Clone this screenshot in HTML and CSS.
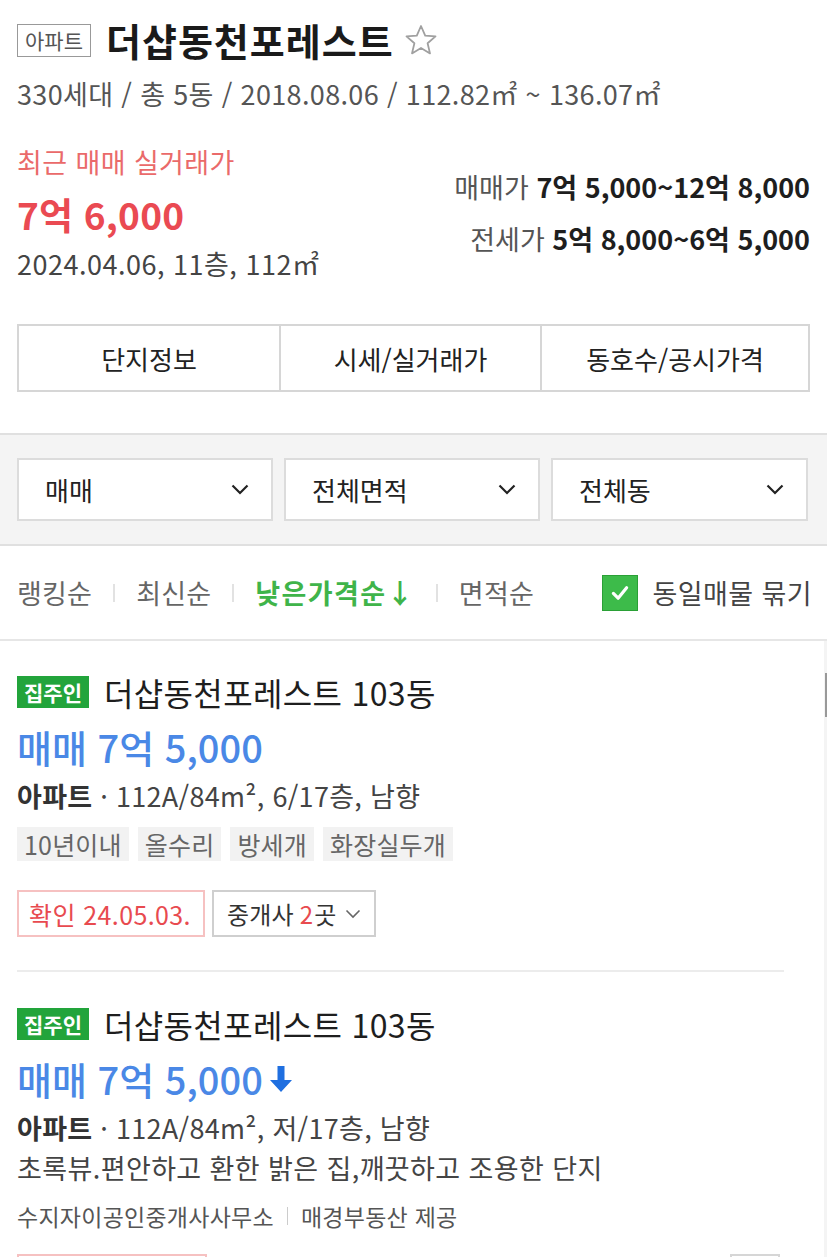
FILE: index.html
```html
<!DOCTYPE html>
<html lang="ko">
<head>
<meta charset="utf-8">
<title>더샵동천포레스트</title>
<link rel="stylesheet" href="styles.css">
</head>
<body>
<div class="page">
  <header class="complex">
    <div class="title-row">
      <span class="type-badge">아파트</span>
      <h1 class="complex-name">더샵동천포레스트</h1>
      <svg class="star" viewBox="0 0 34 34" width="34" height="34"><polygon points="17,3 21.2,12.6 31.5,13.4 23.6,20.2 26,30.4 17,25 8,30.4 10.4,20.2 2.5,13.4 12.8,12.6" fill="none" stroke="#a0a0a0" stroke-width="1.8" stroke-linejoin="round"/></svg>
    </div>
    <p class="summary">330세대 / 총 5동 / 2018.08.06 / 112.82㎡ ~ 136.07㎡</p>
    <div class="price-area">
      <div class="recent">
        <p class="recent-label">최근 매매 실거래가</p>
        <p class="recent-price">7억 6,000</p>
        <p class="recent-date">2024.04.06, 11층, 112㎡</p>
      </div>
      <div class="ranges">
        <p class="range"><span class="range-label">매매가</span> <b>7억 5,000~12억 8,000</b></p>
        <p class="range"><span class="range-label">전세가</span> <b>5억 8,000~6억 5,000</b></p>
      </div>
    </div>
    <nav class="tabs">
      <a class="tab">단지정보</a>
      <a class="tab">시세/실거래가</a>
      <a class="tab">동호수/공시가격</a>
    </nav>
  </header>

  <section class="filters">
    <div class="select"><span>매매</span><svg class="chev" viewBox="0 0 18 11" width="18" height="11"><polyline points="1.5,1.5 9,9 16.5,1.5" fill="none" stroke="#222" stroke-width="2.2"/></svg></div>
    <div class="select"><span>전체면적</span><svg class="chev" viewBox="0 0 18 11" width="18" height="11"><polyline points="1.5,1.5 9,9 16.5,1.5" fill="none" stroke="#222" stroke-width="2.2"/></svg></div>
    <div class="select"><span>전체동</span><svg class="chev" viewBox="0 0 18 11" width="18" height="11"><polyline points="1.5,1.5 9,9 16.5,1.5" fill="none" stroke="#222" stroke-width="2.2"/></svg></div>
  </section>

  <section class="sortbar">
    <div class="sorts">
      <span class="sort">랭킹순</span>
      <span class="sep"></span>
      <span class="sort">최신순</span>
      <span class="sep"></span>
      <span class="sort active">낮은가격순↓</span>
      <span class="sep"></span>
      <span class="sort">면적순</span>
    </div>
    <label class="check">
      <span class="box"><svg viewBox="0 0 36 36" width="36" height="36"><polyline points="11,18.5 16,23.5 25,12.5" fill="none" stroke="#fff" stroke-width="3.4" stroke-linecap="round" stroke-linejoin="round"/></svg></span>
      <span class="check-text">동일매물 묶기</span>
    </label>
  </section>

  <section class="list">
    <article class="item">
      <div class="item-head">
        <span class="owner">집주인</span>
        <span class="item-name">더샵동천포레스트 103동</span>
      </div>
      <p class="item-price">매매 7억 5,000</p>
      <p class="item-info"><b>아파트</b> · 112A/84m², 6/17층, 남향</p>
      <div class="tags">
        <span class="tag">10년이내</span>
        <span class="tag">올수리</span>
        <span class="tag">방세개</span>
        <span class="tag">화장실두개</span>
      </div>
      <div class="actions">
        <span class="confirm">확인 24.05.03.</span>
        <span class="agents">중개사 <em>2</em>곳 <svg viewBox="0 0 16 10" width="16" height="10"><polyline points="1.5,1.5 8,8 14.5,1.5" fill="none" stroke="#666" stroke-width="1.6"/></svg></span>
      </div>
    </article>
    <article class="item">
      <div class="item-head">
        <span class="owner">집주인</span>
        <span class="item-name">더샵동천포레스트 103동</span>
      </div>
      <p class="item-price">매매 7억 5,000<svg class="down" viewBox="0 0 28 32" width="28" height="32"><path d="M10.5 3h7v14h7.5L14 29 3 17h7.5z" fill="#1f6fe0"/></svg></p>
      <p class="item-info"><b>아파트</b> · 112A/84m², 저/17층, 남향</p>
      <p class="item-desc">초록뷰.편안하고 환한 밝은 집,깨끗하고 조용한 단지</p>
      <p class="item-source">수지자이공인중개사사무소<span class="src-sep"></span>매경부동산 제공</p>
      <div class="actions next">
        <span class="confirm-edge"></span>
        <span class="more"></span>
      </div>
    </article>
    <div class="scroll-track"><span class="scroll-thumb"></span></div>
  </section>
</div>
</body>
</html>
```

FILE: styles.css
```css
html, body {
  margin: 0;
  padding: 0;
  background: #fff;
  overflow: hidden;
}
body {
  font-family: "Noto Sans CJK KR", "Noto Sans", sans-serif;
  color: #222;
}
p { margin: 0; }
h1 { margin: 0; }

.page {
  width: 827px;
  height: 1257px;
  overflow: hidden;
}

.complex {
  padding: 20px 17px 0 17px;
}
.title-row {
  display: flex;
  align-items: center;
  height: 40px;
}
.type-badge {
  box-sizing: border-box;
  height: 33px;
  padding: 0 7px;
  border: 1px solid #999;
  font-size: 21px;
  line-height: 31px;
  color: #555;
  letter-spacing: 0;
}
.complex-name {
  margin-left: 15px;
  font-size: 38px;
  font-weight: 700;
  line-height: 40px;
  letter-spacing: 1px;
  color: #1a1a1a;
}
.star {
  margin-left: 10px;
}
.summary {
  margin-top: 16px;
  font-size: 27px;
  line-height: 36px;
  color: #555;
  letter-spacing: 0.35px;
}

.price-area {
  display: flex;
  justify-content: space-between;
  align-items: center;
  margin-top: 32px;
}
.recent-label {
  font-size: 27px;
  line-height: 36px;
  color: #ea6a6a;
  letter-spacing: 0.4px;
}
.recent-price {
  margin-top: 11px;
  font-size: 37px;
  line-height: 46px;
  font-weight: 700;
  color: #ea4a52;
  letter-spacing: 0.2px;
}
.recent-date {
  margin-top: 9px;
  font-size: 27px;
  line-height: 36px;
  color: #444;
  letter-spacing: 0.5px;
}
.ranges {
  display: flex;
  flex-direction: column;
  align-items: flex-end;
  gap: 12px;
}
.range {
  font-size: 27px;
  line-height: 40px;
  letter-spacing: 0;
}
.range-label {
  color: #555;
}
.range b {
  color: #1e1e1e;
  font-weight: 700;
}

.tabs {
  display: grid;
  grid-template-columns: 260px 261px 1fr;
  margin-top: 42px;
  height: 68px;
  box-sizing: border-box;
  border: 2px solid #d6d6d6;
}
.tab {
  display: flex;
  align-items: center;
  justify-content: center;
  font-size: 26px;
  color: #222;
  letter-spacing: 0;
}
.tab + .tab {
  border-left: 2px solid #d6d6d6;
}

.filters {
  margin-top: 41px;
  background: #f4f4f4;
  border-top: 2px solid #e0e0e0;
  border-bottom: 2px solid #e0e0e0;
  padding: 23px 18px 23px 17px;
  display: grid;
  grid-template-columns: 256px 256px 257px;
  gap: 11px;
}
.select {
  box-sizing: border-box;
  height: 63px;
  background: #fff;
  border: 2px solid #dcdcdc;
  display: flex;
  align-items: center;
  justify-content: space-between;
  padding: 0 22px 0 26px;
  font-size: 26px;
  color: #222;
  letter-spacing: 0;
}

.sortbar {
  height: 95px;
  box-sizing: border-box;
  border-bottom: 2px solid #e6e6e6;
  display: flex;
  align-items: center;
  justify-content: space-between;
  padding: 0 15px 0 17px;
}
.sorts {
  display: flex;
  align-items: center;
}
.sort {
  font-size: 27px;
  color: #666;
  letter-spacing: 0.2px;
}
.sort.active {
  color: #3fb44a;
  font-weight: 700;
  letter-spacing: 1.4px;
}
.sep {
  width: 2px;
  height: 18px;
  background: #e2e2e2;
  margin: 0 21px;
}
.check {
  display: flex;
  align-items: center;
}
.box {
  width: 36px;
  height: 36px;
  box-sizing: border-box;
  background: #3dbb4a;
  border: 1px solid #2aa036;
  display: flex;
  align-items: center;
  justify-content: center;
}
.box svg { display: block; }
.check-text {
  margin-left: 15px;
  font-size: 27px;
  color: #444;
  letter-spacing: 0.4px;
}

.list {
  position: relative;
  padding: 0 43px 0 17px;
}
.item {
  padding: 35px 0 33px;
  border-bottom: 2px solid #ececec;
}
.item + .item {
  padding-top: 36px;
  border-bottom: 0;
}
.item-head {
  display: flex;
  align-items: center;
  height: 32px;
}
.owner {
  height: 32px;
  padding: 0 7px;
  background: #22a43b;
  color: #fff;
  font-size: 21px;
  font-weight: 700;
  line-height: 32px;
  letter-spacing: 0;
}
.item-name {
  margin-left: 15px;
  font-size: 32px;
  line-height: 32px;
  color: #1e1e1e;
  letter-spacing: 0.35px;
}
.item-price {
  margin-top: 16px;
  display: flex;
  align-items: center;
  font-size: 38px;
  line-height: 46px;
  font-weight: 500;
  color: #4a88e6;
  letter-spacing: 0;
}
.down {
  margin-left: 4px;
}
.item-info {
  margin-top: 8px;
  font-size: 27px;
  line-height: 36px;
  color: #444;
  letter-spacing: 0.3px;
}
.item-info b {
  color: #333;
  font-weight: 700;
}
.tags {
  margin-top: 13px;
  display: flex;
  gap: 9px;
}
.tag {
  height: 34px;
  padding: 0 7px;
  background: #f2f2f2;
  font-size: 25px;
  line-height: 34px;
  color: #666;
  letter-spacing: 0.2px;
}
.actions {
  margin-top: 29px;
  display: flex;
  gap: 7px;
}
.confirm, .agents {
  box-sizing: border-box;
  height: 47px;
  display: flex;
  align-items: center;
  letter-spacing: 0.2px;
}
.confirm {
  padding: 0 12px 0 10px;
  border: 2px solid #f6c1c1;
  color: #e84a4f;
  font-size: 25px;
  letter-spacing: 0.4px;
}
.agents {
  padding: 0 13px;
  border: 2px solid #cfcfcf;
  color: #333;
  font-size: 24px;
}
.agents em {
  font-style: normal;
  color: #e84a4f;
  margin: 0 1px 0 6px;
}
.agents svg {
  margin-left: 8px;
}
.item-desc {
  margin-top: 4px;
  font-size: 27px;
  line-height: 36px;
  color: #444;
  letter-spacing: 0.4px;
}
.item-source {
  margin-top: 14px;
  display: flex;
  align-items: center;
  font-size: 23px;
  line-height: 32px;
  color: #555;
  letter-spacing: 0.25px;
}
.src-sep {
  width: 1px;
  height: 18px;
  background: #ccc;
  margin: 0 13px;
}
.actions.next {
  margin-top: 22px;
}
.confirm-edge {
  box-sizing: border-box;
  width: 190px;
  height: 47px;
  border: 2px solid #f6c1c1;
}
.more {
  box-sizing: border-box;
  width: 50px;
  height: 47px;
  margin-left: auto;
  margin-right: 4px;
  border: 2px solid #d6d6d6;
}

.scroll-track {
  position: absolute;
  top: 0;
  right: 0;
  bottom: 0;
  width: 3px;
  background: #f4f4f4;
}
.scroll-thumb {
  position: absolute;
  top: 32px;
  left: 1px;
  width: 2px;
  height: 44px;
  background: #999;
}
```
